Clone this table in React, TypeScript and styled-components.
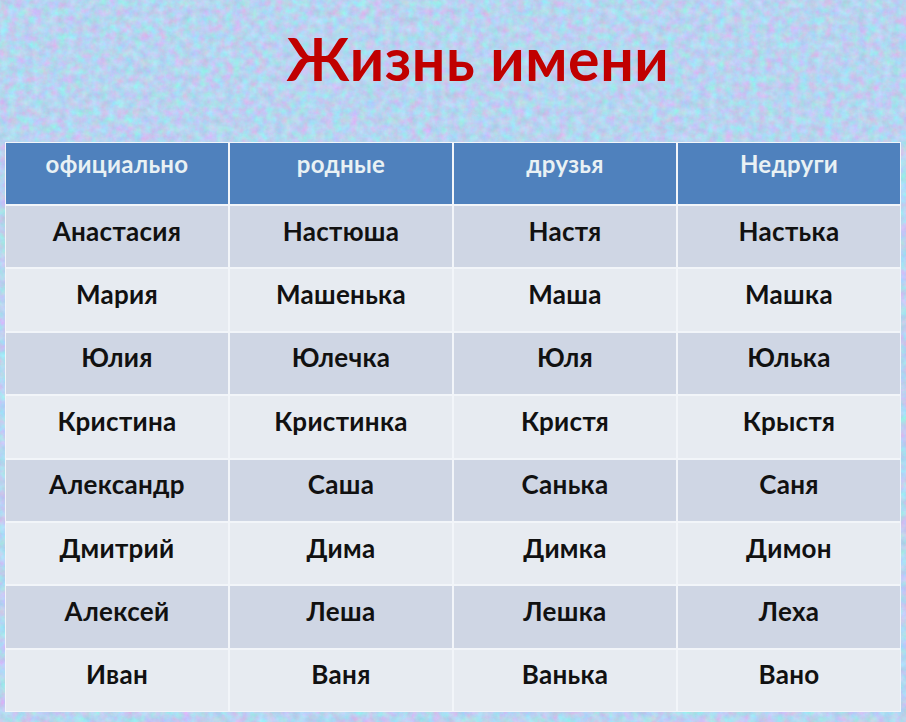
import styled, { createGlobalStyle } from "styled-components";

const GlobalStyle = createGlobalStyle`
	html, body {
		margin: 0;
		padding: 0;
		background: #bfd1ee;
	}
	body {
		font-family: "Lato", "Open Sans", sans-serif;
	}
`;

const headers = ["официально", "родные", "друзья", "Недруги"];

const rows = [
	["Анастасия", "Настюша", "Настя", "Настька"],
	["Мария", "Машенька", "Маша", "Машка"],
	["Юлия", "Юлечка", "Юля", "Юлька"],
	["Кристина", "Кристинка", "Кристя", "Крыстя"],
	["Александр", "Саша", "Санька", "Саня"],
	["Дмитрий", "Дима", "Димка", "Димон"],
	["Алексей", "Леша", "Лешка", "Леха"],
	["Иван", "Ваня", "Ванька", "Вано"],
];

// speckled blue/pink paper texture behind the slide
const Texture = () => (
	<Backdrop aria-hidden="true">
		<filter id="speckle" colorInterpolationFilters="sRGB">
			<feTurbulence type="fractalNoise" baseFrequency="0.12" numOctaves="4" seed="3" />
			<feColorMatrix
				type="matrix"
				values="0.3 -0.16 0 0 0.65
				        -0.12 0.26 0 0 0.76
				        0 0 0.16 0 0.86
				        0 0 0 0 1"
			/>
		</filter>
		<rect width="100%" height="100%" filter="url(#speckle)" />
	</Backdrop>
);

const App = () => {
	return (
		<>
			<GlobalStyle />
			<Slide>
				<Texture />
				<Title>Жизнь имени</Title>
				<Grid>
					{headers.map((h) => (
						<HeadCell key={h}>{h}</HeadCell>
					))}
					{rows.map((row, i) =>
						row.map((name, j) => (
							<Cell key={`${i}-${j}`} $odd={i % 2 === 0}>
								{name}
							</Cell>
						))
					)}
				</Grid>
			</Slide>
		</>
	);
};

const Slide = styled.div`
	position: relative;
	width: 906px;
	height: 722px;
	overflow: hidden;
	display: flex;
	flex-direction: column;
	align-items: center;
`;

const Backdrop = styled.svg`
	position: absolute;
	inset: 0;
	width: 100%;
	height: 100%;
	z-index: 0;
`;

const Title = styled.h1`
	position: relative;
	z-index: 1;
	margin: 0 0 0 50px;
	height: 142px;
	padding-top: 25px;
	box-sizing: border-box;
	font-family: "Lato", sans-serif;
	font-weight: 700;
	font-size: 59px;
	line-height: 68px;
	color: #c00000;
	letter-spacing: 0.6px;
`;

const Grid = styled.div`
	position: relative;
	z-index: 1;
	width: 896px;
	display: grid;
	grid-template-columns: repeat(4, 1fr);
	grid-template-rows: 61px repeat(8, 61.4px);
	gap: 2px;
	padding: 1px;
	box-sizing: border-box;
	background: #f2f5f9;
`;

const HeadCell = styled.div`
	background: #4f81bd;
	color: #e9f1f4;
	font-weight: 700;
	font-size: 24px;
	letter-spacing: 0.3px;
	text-align: center;
	padding-top: 6px;
	line-height: 30px;
`;

const Cell = styled.div<{ $odd: boolean }>`
	background: ${(p) => (p.$odd ? "#cfd6e4" : "#e7ebf1")};
	color: #111;
	font-weight: 700;
	font-size: 26px;
	letter-spacing: 0.3px;
	display: flex;
	align-items: center;
	justify-content: center;
	padding-bottom: 12px;
	box-sizing: border-box;
`;

export default App;
